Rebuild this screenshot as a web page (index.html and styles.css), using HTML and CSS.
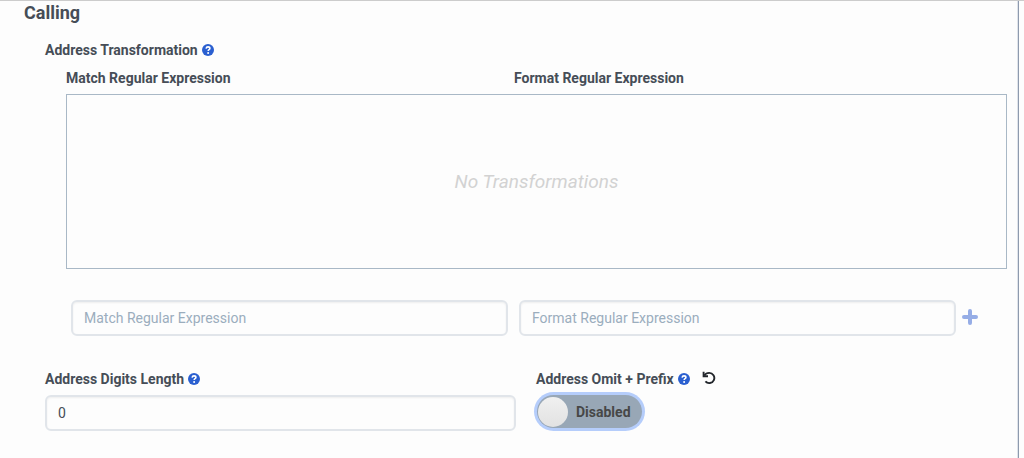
FILE: index.html
```html
<!DOCTYPE html>
<html lang="en">
<head>
<meta charset="utf-8">
<title>Calling</title>
<link rel="stylesheet" href="styles.css">
</head>
<body>
<svg class="sprite" aria-hidden="true">
  <symbol id="help" viewBox="0 0 12 12">
    <circle cx="6" cy="6" r="6" fill="#2a5fd0"/>
    <path d="M4.100 4.600C4.300 3.400 5 2.900 6 2.900c1.100 0 1.900.6 1.900 1.500 0 1.300-1.700 1.300-1.700 2.500" fill="none" stroke="#fff" stroke-width="1.600"/>
    <circle cx="6.100" cy="8.900" r="1" fill="#fff"/>
  </symbol>
</svg>
<main class="panel">
  <h1 class="title">Calling</h1>
  <form class="settings">
    <section class="transform">
      <h2 class="label">Address Transformation
        <button class="icon-button" type="button" aria-label="Help: Address Transformation"><svg class="help"><use href="#help"/></svg></button>
      </h2>
      <div class="transform-body">
        <div class="columns">
          <label class="label" for="match">Match Regular Expression</label>
          <label class="label" for="format">Format Regular Expression</label>
        </div>
        <div class="list">No Transformations</div>
        <div class="add-row">
          <div class="pair">
            <input class="field" id="match" type="text" placeholder="Match Regular Expression">
            <input class="field" id="format" type="text" placeholder="Format Regular Expression">
          </div>
          <button class="icon-button add" type="button" aria-label="Add transformation">
            <svg class="plus" viewBox="0 0 16 16"><path d="M8 2v12M2 8h12" stroke="#96ade6" stroke-width="4" stroke-linecap="round"/></svg>
          </button>
        </div>
      </div>
    </section>
    <div class="options">
      <div class="option">
        <div class="option-head">
          <label class="label" for="digits">Address Digits Length</label>
          <button class="icon-button" type="button" aria-label="Help: Address Digits Length"><svg class="help"><use href="#help"/></svg></button>
        </div>
        <input class="field" id="digits" type="text" value="0">
      </div>
      <div class="option">
        <div class="option-head">
          <label class="label" for="omit">Address Omit + Prefix</label>
          <button class="icon-button" type="button" aria-label="Help: Address Omit + Prefix"><svg class="help"><use href="#help"/></svg></button>
          <button class="icon-button reset" type="button" aria-label="Reset">
            <svg class="undo" viewBox="0 0 14 14"><path d="M2.300 4.600C3.400 2.800 5 1.900 7.200 1.900a5.100 5.100 0 1 1-3.800 8.500" fill="none" stroke="#22262b" stroke-width="1.900"/><path d="M1.600.7v4.500H6" fill="none" stroke="#22262b" stroke-width="1.900"/></svg>
          </button>
        </div>
        <label class="toggle">
          <input class="toggle-input" id="omit" type="checkbox">
          <span class="toggle-text">Disabled</span>
        </label>
      </div>
    </div>
  </form>
</main>
</body>
</html>
```
FILE: styles.css
```css
* { box-sizing: border-box; }

body {
  margin: 0;
  background: #fdfdfd;
  color: #464d57;
  font: 14px/20px Roboto, "Liberation Sans", sans-serif;
}

.sprite { display: none; }

.panel {
  min-height: 100vh;
  margin-right: 5px;
  padding: 0 11px 24px 24px;
  border-right: 1px solid #8e9aae;
  box-shadow: inset -1px 0 #dfe3ea;
}

body::before {
  content: "";
  position: absolute;
  inset: 0 0 auto;
  height: 1px;
  background: #cccccc;
}

.title {
  margin: 0;
  padding-top: 1px;
  font-size: 18px;
  line-height: 24px;
  font-weight: 700;
}

.settings { padding: 15px 0 0 21px; }

.label {
  display: flex;
  align-items: center;
  gap: 4px;
  margin: 0;
  font-size: 14px;
  line-height: 20px;
  font-weight: 700;
}

.icon-button {
  display: flex;
  padding: 0;
  border: 0;
  background: none;
  cursor: pointer;
}

.help { width: 12px; height: 12px; }

.transform-body { padding: 8px 0 0 21px; }

.columns {
  display: grid;
  grid-template-columns: 1fr 1fr;
  padding-right: 45px;
}

.list {
  display: flex;
  align-items: center;
  justify-content: center;
  min-height: 175px;
  margin-top: 6px;
  border: 1px solid #a9b8c6;
  color: #d2d2d2;
  font-size: 19px;
  font-style: italic;
}

.add-row {
  display: flex;
  align-items: center;
  gap: 6px;
  margin-top: 31px;
  padding: 0 29px 0 5px;
}

.pair {
  display: grid;
  flex: 1;
  grid-template-columns: 1fr 1fr;
  gap: 11px;
}

.add { padding-bottom: 3px; }

.plus { width: 16px; height: 16px; }

.field {
  width: 100%;
  height: 36px;
  padding: 0 11px;
  border: 2px solid #e1e5ea;
  border-radius: 6px;
  background: #fdfdfd;
  box-shadow: inset 0 1px 2px #eeeeee;
  color: #464d57;
  font: inherit;
}

.field::placeholder { color: #9badbd; opacity: 1; }

.options {
  display: grid;
  grid-template-columns: 1fr 1fr;
  gap: 20px;
  margin-top: 33px;
}

.option-head {
  display: flex;
  align-items: center;
  gap: 4px;
  margin-bottom: 6px;
}

.reset {
  margin-left: 8px;
  padding-bottom: 3px;
}

.undo { width: 14px; height: 14px; }

.toggle {
  display: inline-flex;
  align-items: center;
  gap: 8px;
  height: 33px;
  margin-left: 1px;
  padding: 0 11px 0 1px;
  border-radius: 17px;
  background: #98a7b6;
  box-shadow: 0 0 0 3px #b5cdfb;
  color: #474747;
  font-weight: 700;
  cursor: pointer;
}

.toggle-input {
  appearance: none;
  width: 30px;
  height: 30px;
  margin: 0;
  border-radius: 50%;
  background: linear-gradient(#f0f0f0, #e2e2e2);
  outline: 0;
}
```
